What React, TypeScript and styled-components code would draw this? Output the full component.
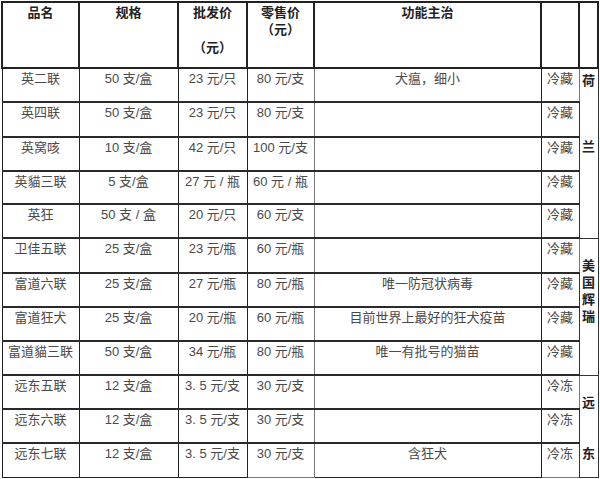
import React from 'react';
import styled, { createGlobalStyle } from 'styled-components';

const GlobalStyle = createGlobalStyle`
  html, body {
    margin: 0;
    padding: 0;
    background: #fff;
  }
  body {
    font-family: "Liberation Sans", "Noto Sans CJK SC", sans-serif;
  }
`;

const Page = styled.div`
  padding: 1px 0 0 1px;
  width: 600px;
  height: 479px;
  box-sizing: border-box;
  overflow: hidden;
`;

const Table = styled.table`
  width: 596px;
  table-layout: fixed;
  border-collapse: collapse;
  font-size: 13px;
  line-height: 17px;
  color: #4a4a4a;
`;

const HeadCell = styled.th`
  height: 66px;
  padding: 1px 0 0;
  vertical-align: top;
  text-align: center;
  font-weight: 700;
  color: #222;
  border: 2px solid #222;
  box-sizing: border-box;
`;

const HeadLine = styled.div<{ $gap?: number }>`
  margin-top: ${({ $gap }) => $gap ?? 0}px;
`;

const Row = styled.tr<{ $h: number }>`
  height: ${({ $h }) => $h}px;
`;

const Cell = styled.td<{ $light?: boolean }>`
  padding: 1px 0 0;
  vertical-align: top;
  text-align: center;
  white-space: nowrap;
  overflow: hidden;
  border: 1px solid ${({ $light }) => ($light ? '#777' : '#222')};
  border-top: 2px solid #2a2a2a;
  box-sizing: border-box;
`;

const GroupCell = styled.td`
  padding: 0;
  vertical-align: top;
  text-align: center;
  border: 1px solid #333;
  font-weight: 700;
  color: #222;
`;

const Stack = styled.div<{ $pt: number; $gap: number }>`
  display: flex;
  flex-direction: column;
  align-items: center;
  padding-top: ${({ $pt }) => $pt}px;
  gap: ${({ $gap }) => $gap}px;
`;

type Item = {
  name: string;
  spec: string;
  wholesale: string;
  retail: string;
  use: string;
  store: string;
  h: number;
};

const items: Item[] = [
  { name: '英二联', spec: '50 支/盒', wholesale: '23 元/只', retail: '80 元/支', use: '犬瘟，细小', store: '冷藏', h: 34 },
  { name: '英四联', spec: '50 支/盒', wholesale: '23 元/只', retail: '80 元/支', use: '', store: '冷藏', h: 35 },
  { name: '英窝咳', spec: '10 支/盒', wholesale: '42 元/只', retail: '100 元/支', use: '', store: '冷藏', h: 34 },
  { name: '英貓三联', spec: '5 支/盒', wholesale: '27 元 / 瓶', retail: '60 元 / 瓶', use: '', store: '冷藏', h: 33 },
  { name: '英狂', spec: '50 支 / 盒', wholesale: '20 元/只', retail: '60 元/支', use: '', store: '冷藏', h: 34 },
  { name: '卫佳五联', spec: '25 支/盒', wholesale: '23 元/瓶', retail: '60 元/瓶', use: '', store: '冷藏', h: 35 },
  { name: '富道六联', spec: '25 支/盒', wholesale: '27 元/瓶', retail: '80 元/瓶', use: '唯一防冠状病毒', store: '冷藏', h: 34 },
  { name: '富道狂犬', spec: '25 支/盒', wholesale: '20 元/瓶', retail: '60 元/瓶', use: '目前世界上最好的狂犬疫苗', store: '冷藏', h: 34 },
  { name: '富道貓三联', spec: '50 支/盒', wholesale: '34 元/瓶', retail: '80 元/瓶', use: '唯一有批号的猫苗', store: '冷藏', h: 34 },
  { name: '远东五联', spec: '12 支/盒', wholesale: '3. 5 元/支', retail: '30 元/支', use: '', store: '冷冻', h: 34 },
  { name: '远东六联', spec: '12 支/盒', wholesale: '3. 5 元/支', retail: '30 元/支', use: '', store: '冷冻', h: 34 },
  { name: '远东七联', spec: '12 支/盒', wholesale: '3. 5 元/支', retail: '30 元/支', use: '含狂犬', store: '冷冻', h: 34 },
];

// origin label in the last column, keyed by the row it starts on
const groups: Record<number, { span: number; chars: string[]; pt: number; gap: number }> = {
  0: { span: 5, chars: ['荷', '兰'], pt: 3, gap: 49 },
  5: { span: 4, chars: ['美', '国', '辉', '瑞'], pt: 18, gap: 0 },
  9: { span: 3, chars: ['远', '东'], pt: 18, gap: 34 },
};

const widths = [77, 99, 69, 67, 227, 38, 19];

export default function App() {
  return (
    <Page>
      <GlobalStyle />
      <Table>
        <colgroup>
          {widths.map((w, i) => (
            <col key={i} style={{ width: w }} />
          ))}
        </colgroup>
        <thead>
          <tr>
            <HeadCell>品名</HeadCell>
            <HeadCell>规格</HeadCell>
            <HeadCell>
              <HeadLine>批发价</HeadLine>
              <HeadLine $gap={18}>（元）</HeadLine>
            </HeadCell>
            <HeadCell>
              <HeadLine>零售价</HeadLine>
              <HeadLine>（元）</HeadLine>
            </HeadCell>
            <HeadCell>功能主治</HeadCell>
            <HeadCell />
            <HeadCell />
          </tr>
        </thead>
        <tbody>
          {items.map((it, i) => {
            const g = groups[i];
            return (
              <Row key={it.name} $h={it.h}>
                <Cell>{it.name}</Cell>
                <Cell>{it.spec}</Cell>
                <Cell>{it.wholesale}</Cell>
                <Cell $light>{it.retail}</Cell>
                <Cell>{it.use}</Cell>
                <Cell $light>{it.store}</Cell>
                {g && (
                  <GroupCell rowSpan={g.span}>
                    <Stack $pt={g.pt} $gap={g.gap}>
                      {g.chars.map((c) => (
                        <span key={c}>{c}</span>
                      ))}
                    </Stack>
                  </GroupCell>
                )}
              </Row>
            );
          })}
        </tbody>
      </Table>
    </Page>
  );
}
